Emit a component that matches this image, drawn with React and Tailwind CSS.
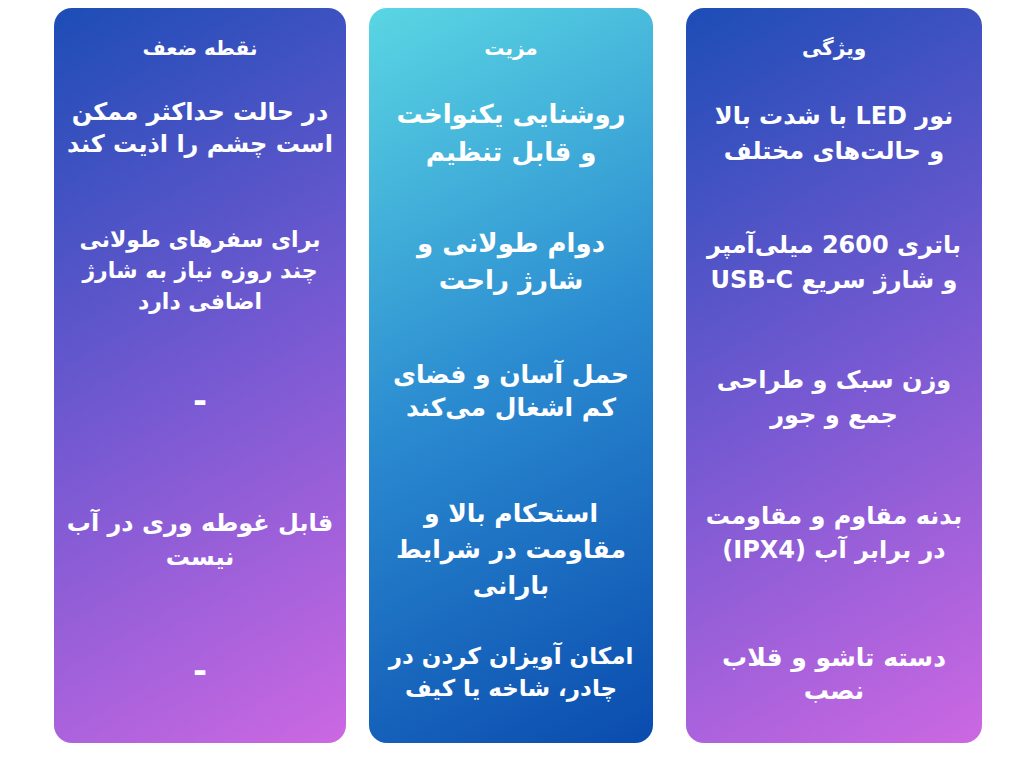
const columns = [
  {
    title: 'نقطه ضعف',
    width: 'w-[292px]',
    bg: 'bg-linear-[150deg] from-[#1c4db6] via-[#7559d2] to-[#cc68e2]',
    rows: [
      { lines: ['در حالت حداکثر ممکن', 'است چشم را اذیت کند'], size: 'text-[24px] leading-[32px]', shift: '-mt-[12px]' },
      { lines: ['برای سفرهای طولانی', 'چند روزه نیاز به شارژ', 'اضافی دارد'], size: 'text-[22px] leading-[31px]', shift: 'mt-[3px]' },
      { lines: ['-'], size: 'text-[34px] leading-[32px]', shift: '-mt-[9px]' },
      { lines: ['قابل غوطه وری در آب', 'نیست'], size: 'text-[24px] leading-[34px]', shift: '' },
      { lines: ['-'], size: 'text-[34px] leading-[32px]', shift: '-mt-[11px]' },
    ],
  },
  {
    title: 'مزیت',
    width: 'w-[284px]',
    bg: 'bg-linear-[152deg] from-[#5ad6e3] via-[#2a8ad0] to-[#0a4bae]',
    rows: [
      { lines: ['روشنایی یکنواخت', 'و قابل تنظیم'], size: 'text-[26px] leading-[38px]', shift: '-mt-[2px]' },
      { lines: ['دوام طولانی و', 'شارژ راحت'], size: 'text-[26px] leading-[37px]', shift: '-mt-[14px]' },
      { lines: ['حمل آسان و فضای', 'کم اشغال می‌کند'], size: 'text-[25px] leading-[33px]', shift: '-mt-[26px]' },
      { lines: ['استحکام بالا و', 'مقاومت در شرایط', 'بارانی'], size: 'text-[25px] leading-[36px]', shift: 'mt-[20px]' },
      { lines: ['امکان آویزان کردن در', 'چادر، شاخه یا کیف'], size: 'text-[23px] leading-[32px]', shift: '-mt-[6px]' },
    ],
  },
  {
    title: 'ویژگی',
    width: 'w-[296px]',
    bg: 'bg-linear-[150deg] from-[#1c4db6] via-[#7559d2] to-[#cc68e2]',
    rows: [
      { lines: ['نور LED با شدت بالا', 'و حالت‌های مختلف'], size: 'text-[24px] leading-[35px]', shift: '' },
      { lines: ['باتری 2600 میلی‌آمپر', 'و شارژ سریع USB-C'], size: 'text-[24px] leading-[35px]', shift: '-mt-[13px]' },
      { lines: ['وزن سبک و طراحی', 'جمع و جور'], size: 'text-[24px] leading-[35px]', shift: '-mt-[13px]' },
      { lines: ['بدنه مقاوم و مقاومت', 'در برابر آب (IPX4)'], size: 'text-[24px] leading-[34px]', shift: '-mt-[13px]' },
      { lines: ['دسته تاشو و قلاب', 'نصب'], size: 'text-[25px] leading-[33px]', shift: '-mt-[2px]' },
    ],
  },
]

function Column({ col }) {
  return (
    <div dir="rtl" className={`${col.width} h-[735px] rounded-[18px] ${col.bg} flex flex-col text-white`}>
      {/* header */}
      <div className="h-[58px] flex items-end justify-center pb-[6px]">
        <span className="text-[20px] font-bold leading-[24px]">{col.title}</span>
      </div>
      {/* rows */}
      <div className="flex-1 grid grid-rows-5">
        {col.rows.map((row, i) => (
          <div key={i} className="flex items-center justify-center">
            <p className={`${row.size} ${row.shift} font-bold text-center whitespace-nowrap`}>
              {row.lines.map((l, j) => (
                <span key={j} className="block">{l}</span>
              ))}
            </p>
          </div>
        ))}
      </div>
    </div>
  )
}

export default function App() {
  return (
    <div
      className="w-[1024px] h-[768px] bg-white flex pl-[54px] pt-[8px]"
      style={{ fontFamily: '"DejaVu Sans", sans-serif' }}
    >
      <Column col={columns[0]} />
      <div className="ml-[23px]">
        <Column col={columns[1]} />
      </div>
      <div className="ml-[33px]">
        <Column col={columns[2]} />
      </div>
    </div>
  )
}
